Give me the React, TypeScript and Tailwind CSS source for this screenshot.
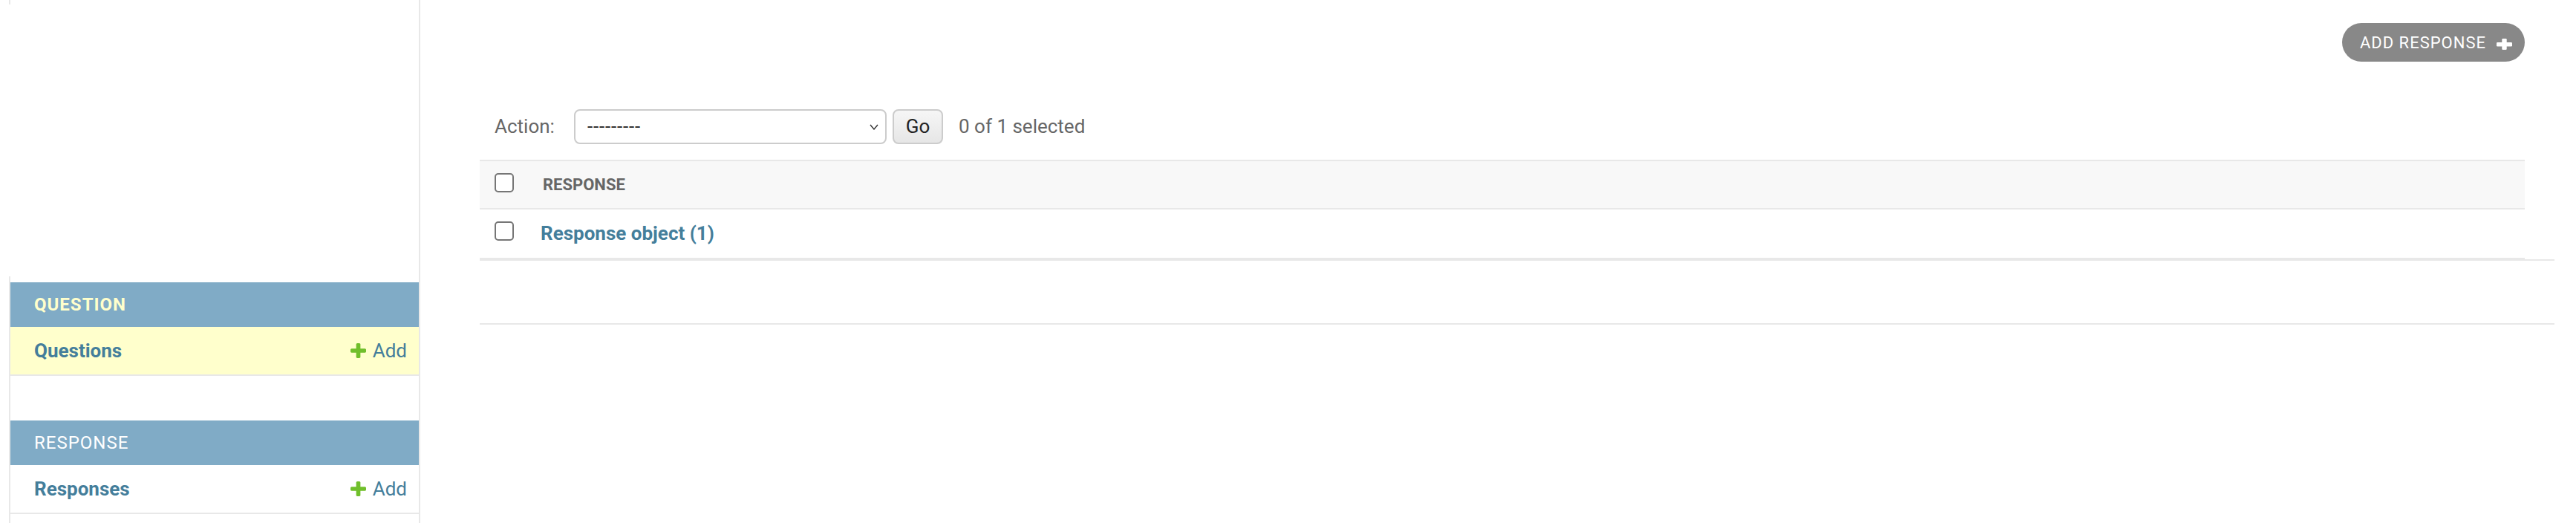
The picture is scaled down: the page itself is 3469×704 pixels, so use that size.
import React from 'react'

const plusPath =
  'M1600 796v192q0 40-28 68t-68 28h-416v416q0 40-28 68t-68 28h-192q-40 0-68-28t-28-68v-416h-416q-40 0-68-28t-28-68v-192q0-40 28-68t68-28h416v-416q0-40 28-68t68-28h192q40 0 68 28t28 68v416h416q40 0 68 28t28 68z'

const PlusIcon = ({ width, height, color }: { width: number; height: number; color: string }) => (
  <svg width={width} height={height} viewBox="192 188 1408 1408" preserveAspectRatio="none" fill={color}>
    <path d={plusPath} />
  </svg>
)

// the white plus on the object-tools button is a bit squashed in the reference
const ToolPlus = () => (
  <svg width="21" height="15" viewBox="0 0 21 15" fill="#ffffff">
    <rect x="0" y="5" width="21" height="5.5" rx="1.2" />
    <rect x="7.3" y="0" width="6.4" height="15" rx="1.2" />
  </svg>
)

const Checkbox = () => (
  <div className="h-[26px] w-[26px] rounded-[5px] border-2 border-[#767676] bg-white" />
)

const modules = [
  { name: 'Question', model: 'Questions', current: true },
  { name: 'Response', model: 'Responses', current: false },
]

const Sidebar = () => (
  <aside className="flex w-[566px] shrink-0 flex-col border-r-2 border-[#e8e8e8] pl-[12px]">
    <div className="h-[6px] border-l-2 border-[#e8e8e8]" />
    <div className="mt-[366px] flex flex-1 flex-col gap-[60px] border-l-2 border-[#e8e8e8] pt-[8px]">
      {modules.map(({ name, model, current }) => (
        <div key={name} className="flex flex-col">
          <div
            className={`flex h-[60px] items-center bg-[#80abc6] pl-[32px] text-[24px] uppercase tracking-[1px] ${
              current ? 'font-bold text-[#ffffcc]' : 'font-normal text-white'
            }`}
          >
            {name}
          </div>
          <div
            className={`flex h-[66px] items-center justify-between border-b-2 border-[#e8e8e8] pl-[32px] pr-[16px] text-[26px] text-[#447e9b] ${
              current ? 'bg-[#ffffcc]' : 'bg-white'
            }`}
          >
            <span className="font-bold">{model}</span>
            <span className="flex items-center gap-[9px]">
              <PlusIcon width={21} height={20} color="#70bf2b" />
              <span>Add</span>
            </span>
          </div>
        </div>
      ))}
    </div>
  </aside>
)

const Actions = () => (
  <div className="mt-[64px] flex h-[47px] items-center pl-[20px] text-[26px]">
    <span className="w-[107px] text-[#666]">Action:</span>
    <div className="flex h-[47px] w-[421px] items-center justify-between rounded-[8px] border-2 border-[#cccccc] bg-white pl-[16px] pr-[9px]">
      <span className="text-[26px] tracking-[0.8px] text-[#333]">---------</span>
      <svg width="12" height="8" viewBox="0 0 12 8" fill="none" stroke="#333" strokeWidth="1.4">
        <polyline points="1,1 6,7 11,1" />
      </svg>
    </div>
    <div className="ml-[8px] flex h-[47px] w-[68px] items-center justify-center rounded-[8px] border-2 border-[#cccccc] bg-gradient-to-b from-[#f6f6f6] to-[#e6e6e6] text-[#222]">
      Go
    </div>
    <span className="ml-[21px] text-[#666]">0 of 1 selected</span>
  </div>
)

const ResultsTable = () => (
  <div className="mr-[40px] mt-[21px] flex flex-col border-t-2 border-[#e8e8e8]">
    <div className="flex h-[65px] border-b-2 border-[#e8e8e8] bg-[#f8f8f8]">
      <div className="w-[66px] pl-[20px] pt-[16px]">
        <Checkbox />
      </div>
      <div className="pl-[19px] pt-[16px] text-[22px] font-bold leading-[32px] text-[#666]">
        RESPONSE
      </div>
    </div>
    <div className="flex h-[67px] border-b-2 border-[#e8e8e8]">
      <div className="w-[66px] pl-[20px] pt-[16px]">
        <Checkbox />
      </div>
      <div className="pl-[16px] pt-[16px] text-[26px] font-bold leading-[32px] text-[#447e9b]">
        Response object (1)
      </div>
    </div>
  </div>
)

export default function App() {
  return (
    <div className="flex min-h-[704px] w-[3469px] bg-white font-['Roboto',_sans-serif]">
      <Sidebar />
      <main className="flex flex-1 flex-col pl-[80px] pr-[29px]">
        <div className="flex justify-end pr-[40px] pt-[31px]">
          <div className="relative flex h-[52px] items-center rounded-full bg-[#888] pl-[24px] pr-[52px] text-[22px] uppercase tracking-[1px] text-white">
            Add response
            <span className="absolute right-[17px] top-[21px] flex">
              <ToolPlus />
            </span>
          </div>
        </div>
        <Actions />
        <ResultsTable />
        <div className="h-[88px] border-y-2 border-[#e8e8e8]" />
      </main>
    </div>
  )
}
